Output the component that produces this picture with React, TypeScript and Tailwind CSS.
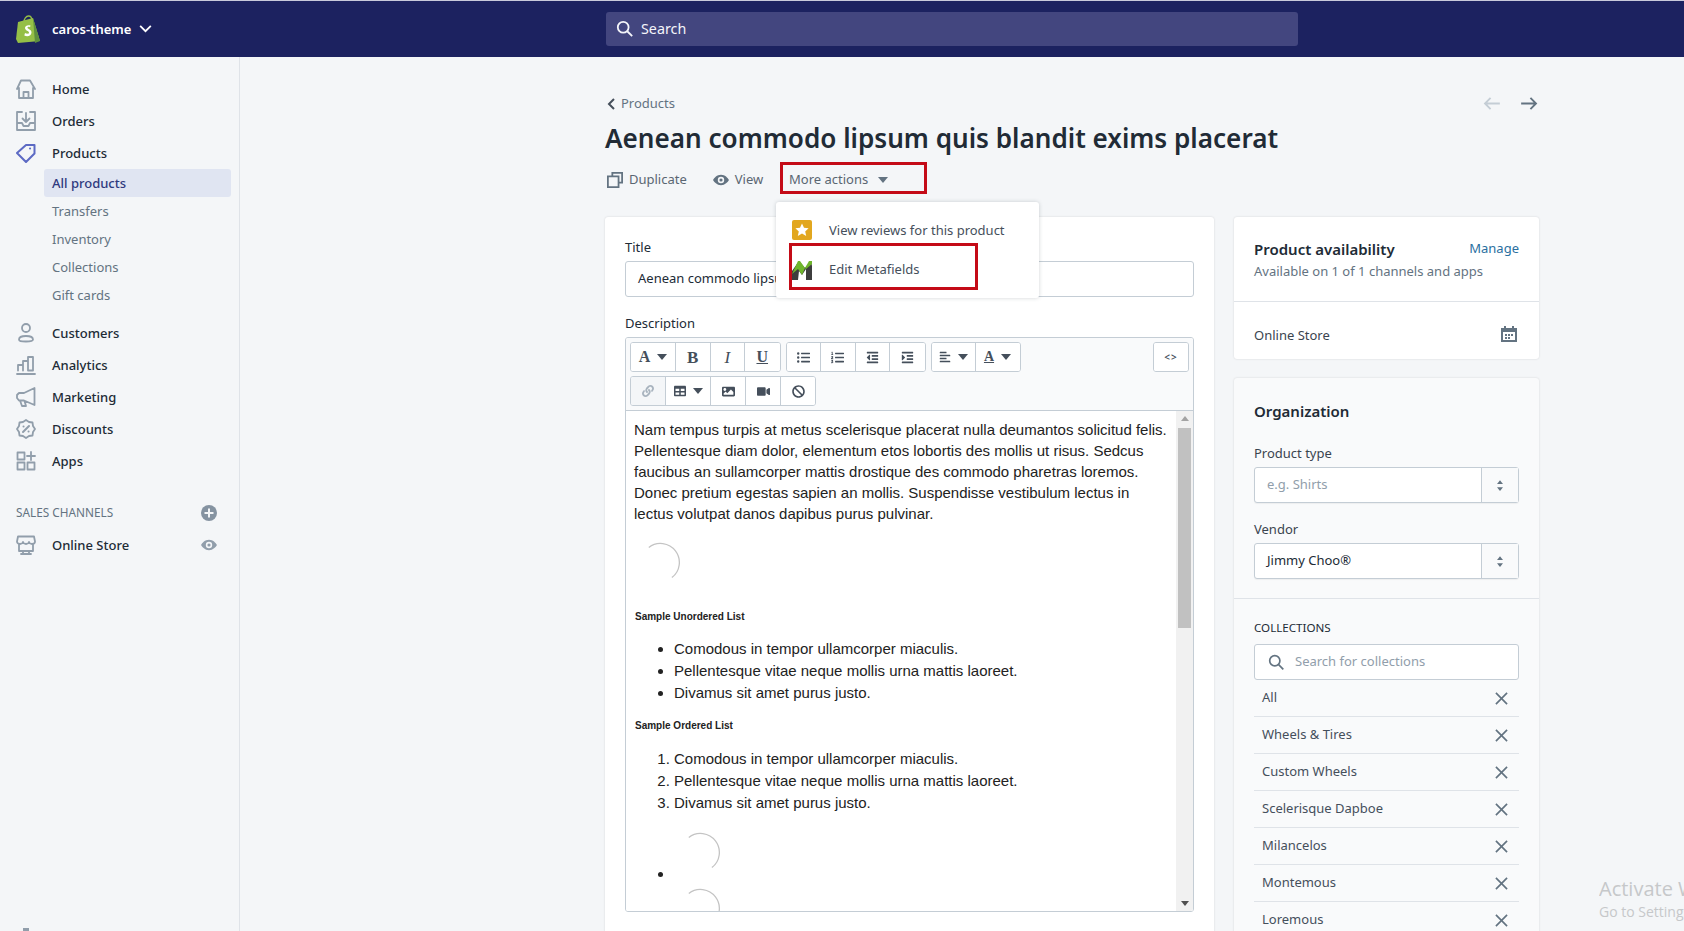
import React from "react";
import { FaListUl, FaListOl, FaOutdent, FaIndent, FaAlignLeft, FaTable, FaImage, FaVideo, FaBan, FaLink } from "react-icons/fa";

const I = ({ children, className = "" }: { children: React.ReactNode; className?: string }) => (
  <svg viewBox="0 0 20 20" className={"w-5 h-5 shrink-0 " + className} fill="none" stroke="currentColor" strokeWidth="1.8" strokeLinejoin="round" strokeLinecap="round">{children}</svg>
);

const Home = () => <I><path d="M1 10 5 1.500h9L19 10M3 9v10h14V9M7.500 19v-6h5v6" /></I>;
const Orders = () => <I><path d="M6 1H1v18h18V1h-5M1 12h5l1.500 3h5l1.500-3h5M10 2v9M6.500 7.500 10 11l3.500-3.500" /></I>;
const Tag = () => <I><path d="M1 10 10 2h8.500v8.500L10 19Z M14 5.500h.1" strokeWidth="2" /></I>;
const User = () => <I><circle cx="10" cy="5" r="4" /><path d="M3 16.500C3 14 6 13 10 13s7 1 7 3.500c0 1.500-1.500 2-7 2s-7-.5-7-2Z" /></I>;
const Bars = () => <I><path d="M1 19h18M2 15.500V10h5v5.500M7 15.500V6h5v9.500M12 15.500V2h5v13.500Z" /></I>;
const Mega = () => <I><path d="M18.500 1v17L8 13.500H3L1 11V8l2-2h5ZM4 13.500 6 19h4l-1.500-5" /></I>;
const Disc = () => <I><path d="M10 1l3 2 3.500.5.5 3.500 2 3-2 3-.5 3.500L13 17l-3 2-3-2-3.500-.5L3 13l-2-3 2-3 .5-3.500L7 3Z" /><path d="M7 13l6-6M7.500 7.500h.1M12.500 12.500h.1" strokeWidth="2" /></I>;
const Apps = () => <I><path d="M1.500 1.500h7v7h-7ZM1.500 11.500h7v7h-7ZM11.500 11.500h7v7h-7ZM15 1v8M11 5h8" /></I>;
const Store = () => <I><path d="M2 1.500h16l1 5c0 1.500-1.500 2.500-3 2.500s-3-1-3-2c0 1-1.500 2-3 2s-3-1-3-2c0 1-1.500 2-3 2S1 8 1 6.500ZM3 9v7h14V9M5 19h10M7 16v3M13 16v3" /></I>;
const Eye = ({ className = "" }: { className?: string }) => (
  <svg viewBox="0 0 20 20" className={className} fill="currentColor"><path fillRule="evenodd" d="M10 3.500C5 3.500 1.500 7.500 0 10c1.500 2.500 5 6.500 10 6.500s8.500-4 10-6.500c-1.500-2.500-5-6.500-10-6.500ZM10 14a4 4 0 1 1 0-8 4 4 0 0 1 0 8Zm0-2a2 2 0 1 0 0-4 2 2 0 0 0 0 4Z" /></svg>
);
const Caret = ({ className = "" }: { className?: string }) => (
  <svg viewBox="0 0 10 6" className={"w-[10px] h-[6px] " + className} fill="currentColor"><path d="M0 0h10L5 6Z" /></svg>
);
const SpinnerSvg = () => (
  <svg viewBox="0 0 40 40" className="block w-10 h-10" fill="none" stroke="#c4c4c4" strokeWidth="1.300"><path d="M7.800 5.400A19 19 0 1 1 30.900 35.600" /></svg>
);

const nav1 = [
  { label: "Home", icon: <Home /> },
  { label: "Orders", icon: <Orders /> },
];
const nav2 = ["Transfers", "Inventory", "Collections", "Gift cards"];
const nav3 = [
  { label: "Customers", icon: <User /> },
  { label: "Analytics", icon: <Bars /> },
  { label: "Marketing", icon: <Mega /> },
  { label: "Discounts", icon: <Disc /> },
  { label: "Apps", icon: <Apps /> },
];
const collections = ["All", "Wheels & Tires", "Custom Wheels", "Scelerisque Dapboe", "Milancelos", "Montemous", "Loremous"];

const NavRow = ({ icon, label }: { icon: React.ReactNode; label: string }) => (
  <div className="flex items-center h-8 pl-4">
    <span className="text-[#919eab]">{icon}</span>
    <span className="ml-4 mt-[2px] text-[#212b36] font-medium">{label}</span>
  </div>
);

const TBtn = ({ w = "w-[34.500px]", children, disabled = false }: { w?: string; children: React.ReactNode; disabled?: boolean }) => (
  <div className={w + " h-[28px] flex items-center justify-center border-r border-[#c4cdd5] last:border-r-0 text-[#454f5b] text-[13px] gap-[7px] " + (disabled ? "bg-[#f4f6f8] text-[#919eab]" : "bg-white")}>{children}</div>
);
const TGroup = ({ children }: { children: React.ReactNode }) => (
  <div className="flex border border-[#c4cdd5] rounded-[3px] overflow-hidden bg-white">{children}</div>
);

const SelectBox = ({ value, placeholder = false }: { value: string; placeholder?: boolean }) => (
  <div className="flex h-9 border border-[#c4cdd5] rounded-[3px] bg-white shadow-[0_1px_1px_rgba(0,0,0,0.05)]">
    <div className={"flex-1 flex items-center pl-3 " + (placeholder ? "text-[#919eab]" : "text-[#212b36]")}>{value}</div>
    <div className="w-[37px] border-l border-[#c4cdd5] bg-[#f9fafb] flex flex-col items-center justify-center gap-[3px] text-[#637381]">
      <svg viewBox="0 0 8 5" className="w-[6px] h-1" fill="currentColor"><path d="M0 5h8L4 0Z" /></svg>
      <svg viewBox="0 0 8 5" className="w-[6px] h-1" fill="currentColor"><path d="M0 0h8L4 5Z" /></svg>
    </div>
  </div>
);

export default function App() {
  return (
    <div className="relative h-[931px] overflow-hidden bg-[#f4f6f8] text-[13px] text-[#212b36] font-['Noto_Sans','Open_Sans',sans-serif]">
      {/* top bar */}
      <header className="flex h-[57px] bg-[#1c2260] border-t border-[#c8cadb]">
        <div className="w-[606px] flex items-center pl-4 text-white">
          <svg viewBox="0 0 24 28" className="w-6 h-[28px]">
            <path d="M2 7 17 3l7 23-22 2L0 24Z" fill="#95bf47" />
            <path d="M17 3l7 23-5 2Z" fill="#5e8e3e" />
            <path d="M8 7c0-3 2-6 4.500-6S16 3 16 6" fill="none" stroke="#95bf47" strokeWidth="1.300" />
            <path d="M14.500 10.500c-3-1-5.500.5-5.500 2.500 0 2.500 4 3 4 4.500 0 1.500-2.500 1.500-4 .5l-.7 2.500c3 1.500 7.200.5 7.200-3 0-3-4-3.500-4-4.700 0-1 1.500-1.200 2.500-.6Z" fill="#fff" />
          </svg>
          <span className="ml-3 mt-[2px] font-semibold">caros-theme</span>
          <svg viewBox="0 0 14 9" className="ml-2 w-[13px] h-2" fill="none" stroke="currentColor" strokeWidth="2"><path d="M1 1l6 6 6-6" /></svg>
        </div>
        <div className="w-[692px] self-center h-[34px] bg-[#43467f] rounded-[3px] flex items-center pl-[10px] text-[#f4f5fa]">
          <svg viewBox="0 0 20 20" className="w-[18px] h-[18px]" fill="none" stroke="currentColor" strokeWidth="2"><circle cx="8" cy="8" r="6" /><path d="M12.500 12.500 18 18" /></svg>
          <span className="ml-[7px] text-[14.300px]">Search</span>
        </div>
      </header>

      <div className="flex h-[874px]">
        {/* sidebar */}
        <aside className="w-[240px] shrink-0 border-r border-[#dfe3e8] pt-[16px]">
          {nav1.map((n) => <NavRow key={n.label} {...n} />)}
          <div className="flex items-center h-8 pl-4">
            <span className="text-[#5c6ac4]"><Tag /></span>
            <span className="ml-4 mt-[2px] text-[#212b36] font-medium">Products</span>
          </div>
          <div className="ml-11 mr-2 h-7 pt-px bg-[#e0e5f2] rounded-[3px] flex items-center pl-[8px] text-[#2f3a7e] font-medium">All products</div>
          {nav2.map((t) => (
            <div key={t} className="ml-[52px] h-7 pt-px flex items-center text-[#637381]">{t}</div>
          ))}
          <div className="h-2" />
          {nav3.map((n) => <NavRow key={n.label} {...n} />)}
          <div className="mt-[20px] h-8 pl-4 pr-[22px] flex items-center justify-between text-[#637381]">
            <span className="text-[11.800px]">SALES CHANNELS</span>
            <svg viewBox="0 0 16 16" className="w-4 h-4 text-[#8593a1]"><circle cx="8" cy="8" r="8" fill="currentColor" /><path d="M8 3.500v9M3.500 8h9" stroke="#f4f6f8" strokeWidth="2" /></svg>
          </div>
          <div className="flex items-center h-8 pl-4 pr-[22px]">
            <span className="text-[#919eab]"><Store /></span>
            <span className="ml-4 mt-[2px] font-medium flex-1">Online Store</span>
            <Eye className="w-4 h-4 text-[#919eab]" />
          </div>
        </aside>

        {/* main */}
        <main className="flex-1 pl-[365px] pt-[35px] pr-[145px] min-w-0">
          <div className="h-[23px] flex items-center justify-between">
            <div className="flex items-center text-[#637381]">
              <svg viewBox="0 0 8 12" className="w-2 h-3 ml-[2px] mr-[6px] text-[#454f5b]" fill="none" stroke="currentColor" strokeWidth="2"><path d="M7 1 2 6l5 5" /></svg>
              <span>Products</span>
            </div>
            <div className="flex items-center gap-[21px] pr-[1px]">
              <svg viewBox="0 0 18 14" className="w-[17px] h-[13px] text-[#c4cdd5]" fill="none" stroke="currentColor" strokeWidth="2"><path d="M18 7H2M8 1 2 7l6 6" /></svg>
              <svg viewBox="0 0 18 14" className="w-[17px] h-[13px] text-[#637381]" fill="none" stroke="currentColor" strokeWidth="2"><path d="M0 7h16M10 1l6 6-6 6" /></svg>
            </div>
          </div>
          <h1 className="mt-[4px] text-[26.120px] leading-[38px] font-semibold text-[#212b36]">Aenean commodo lipsum quis blandit exims placerat</h1>
          <div className="relative mt-[5px] h-[32px] pt-[3px] flex items-center text-[#454f5b]">
            <svg viewBox="0 0 18 18" className="ml-[2px] w-4 h-4 text-[#637381]" fill="none" stroke="currentColor" strokeWidth="2"><path d="M6 5V1h11v11h-4M1 5h12v12H1Z" /></svg>
            <span className="ml-[6px] text-[#5a6672]">Duplicate</span>
            <Eye className="ml-[26px] w-4 h-4 text-[#637381]" />
            <span className="ml-[6px] text-[#5a6672]">View</span>
            <div className="absolute left-[175px] top-0 h-[32px] w-[147px] border-[3px] border-[#c40b17] flex items-center pl-[6px] pt-[3px] text-[#5a6672] gap-[10px]">
              More actions <Caret className="text-[#637381]" />
            </div>
            {/* dropdown */}
            <div className="absolute z-10 left-[171px] top-[40px] w-[263px] h-[96px] bg-white rounded-[3px] shadow-[0_0_4px_rgba(33,43,54,0.2)] pt-[13px] pl-[13px]">
              <div className="h-[30px] flex items-center pl-[3px] text-[#454f5b]">
                <svg viewBox="0 0 20 20" className="w-5 h-5"><rect width="20" height="20" rx="2" fill="#e2a71f" /><path d="m10 3.500 2 4.300 4.600.5-3.400 3.100 1 4.600-4.200-2.400-4.200 2.400 1-4.600-3.400-3.100 4.600-.5Z" fill="#fff" /></svg>
                <span className="ml-[17px] mt-[2px]">View reviews for this product</span>
              </div>
              <div className="h-[47px] w-[189px] -mt-[2px] pt-[6px] border-[3px] border-[#c40b17] flex items-center text-[#454f5b]">
                <svg viewBox="0 0 20 20" className="w-5 h-5">
                  <path d="M0 11 7 1l6 7 6-7 1 5v14h-6V9l-4 6-3-4-1 9H0Z" fill="#3d3d3d" />
                  <path d="M0 14 6 1h2l5 7-3 7-4-6Z" fill="#6fb52c" />
                  <path d="M13 8l4-7h3v3l-6 5Z" fill="#6fb52c" />
                </svg>
                <span className="ml-[17px] mt-[1px]">Edit Metafields</span>
              </div>
            </div>
          </div>

          <div className="mt-[23px] flex gap-5 items-start">
            {/* left card */}
            <section className="w-[609px] shrink-0 h-[720px] bg-white rounded-[3px] shadow-[0_0_2px_rgba(63,63,68,0.2)] px-5 pt-[20px]">
              <div className="h-5 leading-5 text-[#212b36]">Title</div>
              <div className="mt-[4px] h-[36px] border border-[#c4cdd5] rounded-[3px] flex items-center pl-3 text-[#212b36]">Aenean commodo lipsum quis blandit exims placerat</div>
              <div className="mt-[16px] h-5 leading-5">Description</div>
              <div className="mt-[4px] w-[569px] h-[575px] border border-[#c4cdd5] rounded-[3px] flex flex-col overflow-hidden">
                <div className="h-[73px] shrink-0 bg-[#f9fafb] border-b border-[#c4cdd5] px-[4px] pt-[4px] flex justify-between">
                  <div className="flex flex-col gap-[4px]">
                    <div className="flex gap-[5px]">
                      <TGroup>
                        <TBtn w="w-[45px]"><span className="font-['Liberation_Serif',serif] font-bold text-[16px] leading-none">A</span><Caret /></TBtn>
                        <TBtn><span className="font-['Liberation_Serif',serif] font-bold text-[17px] leading-none">B</span></TBtn>
                        <TBtn><span className="font-['Liberation_Serif',serif] italic text-[17px] leading-none">I</span></TBtn>
                        <TBtn><span className="font-['Liberation_Serif',serif] font-bold underline text-[16px] leading-none">U</span></TBtn>
                      </TGroup>
                      <TGroup>
                        <TBtn><FaListUl className="w-[13px] h-[13px]" /></TBtn>
                        <TBtn><FaListOl className="w-[13px] h-[13px]" /></TBtn>
                        <TBtn><FaOutdent className="w-[13px] h-[13px]" /></TBtn>
                        <TBtn><FaIndent className="w-[13px] h-[13px]" /></TBtn>
                      </TGroup>
                      <TGroup>
                        <TBtn w="w-[44px]"><FaAlignLeft className="w-[12px] h-[12px]" /><Caret /></TBtn>
                        <TBtn w="w-[44px]"><span className="font-['Liberation_Serif',serif] font-bold underline text-[14px] leading-none">A</span><Caret /></TBtn>
                      </TGroup>
                    </div>
                    <div className="flex">
                      <TGroup>
                        <TBtn w="w-[35px]" disabled><FaLink className="w-[12px] h-[12px] text-[#a9b4bf]" /></TBtn>
                        <TBtn w="w-[45px]"><FaTable className="w-[12px] h-[12px]" /><Caret /></TBtn>
                        <TBtn w="w-[35px]"><FaImage className="w-[13px] h-[13px]" /></TBtn>
                        <TBtn w="w-[35px]"><FaVideo className="w-[13px] h-[13px]" /></TBtn>
                        <TBtn w="w-[34px]"><FaBan className="w-[13px] h-[13px]" /></TBtn>
                      </TGroup>
                    </div>
                  </div>
                  <div><TGroup><TBtn w="w-[34px]"><span className="text-[10px] font-semibold tracking-[1px]">&lt;&gt;</span></TBtn></TGroup></div>
                </div>
                <div className="flex-1 flex min-h-0 bg-white">
                  <div className="flex-1 overflow-hidden pl-2 pr-[6px] pt-[8px] font-['Liberation_Sans',sans-serif] text-[15px] leading-[21px] text-[#222]">
                    <p>Nam tempus turpis at metus scelerisque placerat nulla deumantos solicitud felis. Pellentesque diam dolor, elementum etos lobortis des mollis ut risus. Sedcus faucibus an sullamcorper mattis drostique des commodo pharetras loremos. Donec pretium egestas sapien an mollis. Suspendisse vestibulum lectus in lectus volutpat danos dapibus purus pulvinar.</p>
                    <div className="mt-[18px] ml-[7px]"><SpinnerSvg /></div>
                    <h4 className="mt-[28px] pl-px text-[10px] leading-[14px] font-bold">Sample Unordered List</h4>
                    <ul className="mt-[14px] pl-10 list-disc">
                      <li className="leading-[22px]">Comodous in tempor ullamcorper miaculis.</li>
                      <li className="leading-[22px]">Pellentesque vitae neque mollis urna mattis laoreet.</li>
                      <li className="leading-[22px]">Divamus sit amet purus justo.</li>
                    </ul>
                    <h4 className="mt-[15px] pl-px text-[10px] leading-[14px] font-bold">Sample Ordered List</h4>
                    <ol className="mt-[15px] pl-10 list-decimal">
                      <li className="leading-[22px]">Comodous in tempor ullamcorper miaculis.</li>
                      <li className="leading-[22px]">Pellentesque vitae neque mollis urna mattis laoreet.</li>
                      <li className="leading-[22px]">Divamus sit amet purus justo.</li>
                    </ol>
                    <ul className="mt-[18px] pl-10 list-disc">
                      <li>
                        <span className="inline-block ml-[7px] mb-[7px] align-baseline"><SpinnerSvg /></span>
                        <span className="block ml-[7px] mt-[4px]"><SpinnerSvg /></span>
                      </li>
                    </ul>
                  </div>
                  <div className="w-[17px] shrink-0 bg-[#f1f1f1] flex flex-col items-center justify-between py-[5px] relative">
                    <svg viewBox="0 0 8 5" className="w-2 h-[5px] text-[#a3a3a3]" fill="currentColor"><path d="M0 5h8L4 0Z" /></svg>
                    <div className="absolute top-[17px] left-[2px] w-[13px] h-[200px] bg-[#c1c1c1]" />
                    <svg viewBox="0 0 8 5" className="w-2 h-[5px] text-[#505050]" fill="currentColor"><path d="M0 0h8L4 5Z" /></svg>
                  </div>
                </div>
              </div>
            </section>

            {/* right column */}
            <div className="w-[305px] shrink-0 flex flex-col gap-[19px]">
              <section className="bg-white rounded-[3px] shadow-[0_0_2px_rgba(63,63,68,0.2)]">
                <div className="h-[85px] px-5 pt-[22px] border-b border-[#dfe3e8]">
                  <div className="flex justify-between">
                    <span className="font-semibold text-[15px] leading-[20px]">Product availability</span>
                    <span className="text-[#2a6f9f] leading-[18px]">Manage</span>
                  </div>
                  <div className="text-[#637381] leading-[22px] mt-[1px]">Available on 1 of 1 channels and apps</div>
                </div>
                <div className="h-[57px] px-5 pt-[11px] flex items-center justify-between">
                  <span className="text-[#3a444f]">Online Store</span>
                  <svg viewBox="0 0 16 16" className="w-4 h-4 text-[#637381] -mt-[5px] mr-[2px]" fill="currentColor"><path fillRule="evenodd" d="M3 0h2v2h6V0h2v2h3v14H0V2h3Zm-1 6v8h12V6ZM4 8h2v2H4Zm3 0h2v2H7Zm3 0h2v2h-2Zm-6 3h2v2H4Zm3 0h2v2H7Z" /></svg>
                </div>
              </section>
              <section className="bg-[#f9fafb] rounded-[3px] shadow-[0_0_2px_rgba(63,63,68,0.2)] h-[560px]">
                <div className="h-[221px] px-5 pt-[23px] border-b border-[#dfe3e8]">
                  <div className="font-semibold text-[15px] leading-[20px]">Organization</div>
                  <div className="mt-[22px] h-5 leading-5 text-[#3a444f]">Product type</div>
                  <div className="mt-[4px]"><SelectBox value="e.g. Shirts" placeholder /></div>
                  <div className="mt-[16px] h-5 leading-5 text-[#3a444f]">Vendor</div>
                  <div className="mt-[4px]"><SelectBox value="Jimmy Choo®" /></div>
                </div>
                <div className="px-5 pt-[20px]">
                  <div className="text-[11.600px] leading-[18px] text-[#212b36]">COLLECTIONS</div>
                  <div className="mt-[7px] h-9 bg-white border border-[#c4cdd5] rounded-[3px] flex items-center pl-[13px] text-[#919eab]">
                    <svg viewBox="0 0 20 20" className="w-[17px] h-[17px] text-[#637381]" fill="none" stroke="currentColor" strokeWidth="2"><circle cx="8" cy="8" r="6" /><path d="M12.500 12.500 18 18" /></svg>
                    <span className="ml-[10px]">Search for collections</span>
                  </div>
                  <div>
                    {collections.map((c) => (
                      <div key={c} className="h-[37px] border-b border-[#dfe3e8] flex items-center justify-between pl-2 pr-[11px] text-[#454f5b]">
                        <span>{c}</span>
                        <svg viewBox="0 0 14 14" className="w-[13px] h-[13px] text-[#637381]" fill="none" stroke="currentColor" strokeWidth="1.800"><path d="M1 1l12 12M13 1 1 13" /></svg>
                      </div>
                    ))}
                  </div>
                </div>
              </section>
            </div>
          </div>
        </main>
      </div>

      {/* Windows watermark */}
      <div className="absolute left-[1599px] top-[875px] w-[85px] overflow-hidden whitespace-nowrap font-['Open_Sans',sans-serif] text-[#c6c8ca] pointer-events-none">
        <div className="text-[20px] leading-[28px]">Activate Windows</div>
        <div className="text-[14px] leading-[18px]">Go to Settings</div>
      </div>

      {/* partial icon at the foot of the sidebar */}
      <div className="absolute left-[23px] top-[928px] w-[6px] h-[3px] bg-[#919eab]" />
    </div>
  );
}
